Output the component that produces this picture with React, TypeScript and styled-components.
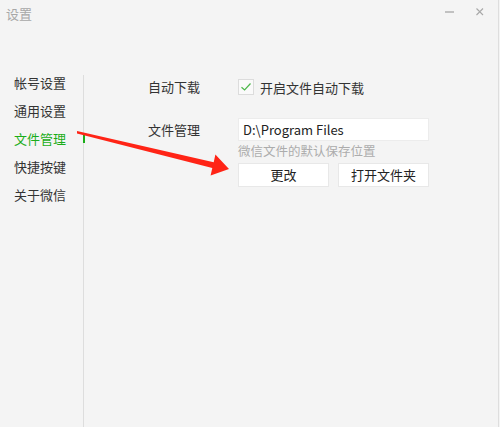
import React from "react";
import styled, { createGlobalStyle } from "styled-components";

const Global = createGlobalStyle`
  html, body { margin: 0; padding: 0; background: #f4f4f4; }
  * { box-sizing: border-box; }
`;

const Window = styled.div`
  position: relative;
  width: 499px;
  height: 427px;
  background: #f4f4f4;
  border-right: 1px solid #dedede;
  font-family: "Noto Sans CJK SC", "Noto Sans", sans-serif;
  font-size: 13px;
  color: #333;
  display: flex;
  flex-direction: column;
  overflow: hidden;
`;

const TitleBar = styled.div`
  height: 28px;
  display: flex;
  align-items: flex-start;
  justify-content: space-between;
  padding: 5px 0 0 6px;
`;

const Title = styled.span`
  font-size: 13px;
  line-height: 18px;
  color: #a8a8a8;
`;

const Controls = styled.div`
  display: flex;
  align-items: center;
  gap: 20px;
  padding: 2px 13px 0 0;
`;

const CtrlIcon = styled.svg`
  display: block;
  width: 10px;
  height: 10px;
`;

const Main = styled.div`
  flex: 1;
  display: flex;
  margin-top: 47px;
`;

const Sidebar = styled.nav`
  width: 84px;
  border-right: 1px solid #dddddd;
  display: flex;
  flex-direction: column;
  gap: 12px;
`;

const NavItem = styled.div<{ $active?: boolean }>`
  position: relative;
  padding-left: 14px;
  line-height: 16px;
  height: 16px;
  white-space: nowrap;
  color: ${(p) => (p.$active ? "#1aad19" : "#333")};
  &::after {
    content: "";
    display: ${(p) => (p.$active ? "block" : "none")};
    position: absolute;
    right: -2px;
    top: 2px;
    width: 2px;
    height: 10px;
    background: #1aad19;
  }
`;

const Content = styled.div`
  padding: 4px 0 0 64px;
  display: grid;
  grid-template-columns: 90px 191px;
  align-content: start;
  align-items: center;
`;

const Label = styled.div<{ $mt?: number }>`
  line-height: 16px;
  margin-top: ${(p) => p.$mt ?? 0}px;
`;

const Field = styled.div<{ $mt?: number }>`
  margin-top: ${(p) => p.$mt ?? 0}px;
`;

const CheckRow = styled.label`
  display: flex;
  align-items: flex-start;
  gap: 6px;
  line-height: 18px;
  height: 16px;
`;

const CheckBox = styled.span`
  flex: none;
  width: 16px;
  height: 16px;
  border: 1px solid #dcdcdc;
  background: #fafafa;
  display: flex;
  align-items: center;
  justify-content: center;
`;

const PathInput = styled.div`
  height: 23px;
  background: #fff;
  border: 1px solid #ececec;
  padding-left: 4px;
  line-height: 21px;
  font-size: 13px;
  color: #222;
`;

const Hint = styled.div`
  color: #acacac;
  font-size: 12.5px;
  line-height: 16px;
  margin-top: 2px;
  white-space: nowrap;
`;

const Buttons = styled.div`
  display: flex;
  gap: 9px;
  margin-top: 4px;
`;

const Button = styled.button`
  width: 91px;
  height: 24px;
  background: #fff;
  border: 1px solid #e8e8e8;
  font-family: inherit;
  font-size: 13px;
  color: #222;
  padding: 0;
  line-height: 22px;
`;

const Annotation = styled.svg`
  position: absolute;
  left: 0;
  top: 0;
  width: 500px;
  height: 427px;
  pointer-events: none;
`;

export default function App() {
  const nav = ["帐号设置", "通用设置", "文件管理", "快捷按键", "关于微信"];
  return (
    <>
      <Global />
      <Window>
        <TitleBar>
          <Title>设置</Title>
          <Controls>
            <CtrlIcon viewBox="0 0 10 10">
              <line x1="0" y1="5" x2="9" y2="5" stroke="#b0b0b0" strokeWidth="1.5" />
            </CtrlIcon>
            <CtrlIcon viewBox="0 0 10 10">
              <path d="M1.5 1.5 L8 8 M8 1.5 L1.5 8" stroke="#a8a8a8" strokeWidth="1.1" />
            </CtrlIcon>
          </Controls>
        </TitleBar>
        <Main>
          <Sidebar>
            {nav.map((n) => (
              <NavItem key={n} $active={n === "文件管理"}>
                {n}
              </NavItem>
            ))}
          </Sidebar>
          <Content>
            <Label>自动下载</Label>
            <Field>
              <CheckRow>
                <CheckBox>
                  <svg width="12" height="12" viewBox="0 0 12 12">
                    <path d="M1.5 6.2 L4.6 9 L10.5 2.5" fill="none" stroke="#4cb84a" strokeWidth="1.2" />
                  </svg>
                </CheckBox>
                开启文件自动下载
              </CheckRow>
            </Field>
            <Label $mt={23}>文件管理</Label>
            <Field $mt={23}>
              <PathInput>D:\Program Files</PathInput>
            </Field>
            <span />
            <Field>
              <Hint>微信文件的默认保存位置</Hint>
              <Buttons>
                <Button>更改</Button>
                <Button>打开文件夹</Button>
              </Buttons>
            </Field>
          </Content>
        </Main>
        <Annotation viewBox="0 0 500 427">
          <polygon
            points="77,131 213.7,162.3 215.4,154.5 229,169 210.6,175.5 212.3,168.1 77,133.5"
            fill="#ff2416"
          />
        </Annotation>
      </Window>
    </>
  );
}
